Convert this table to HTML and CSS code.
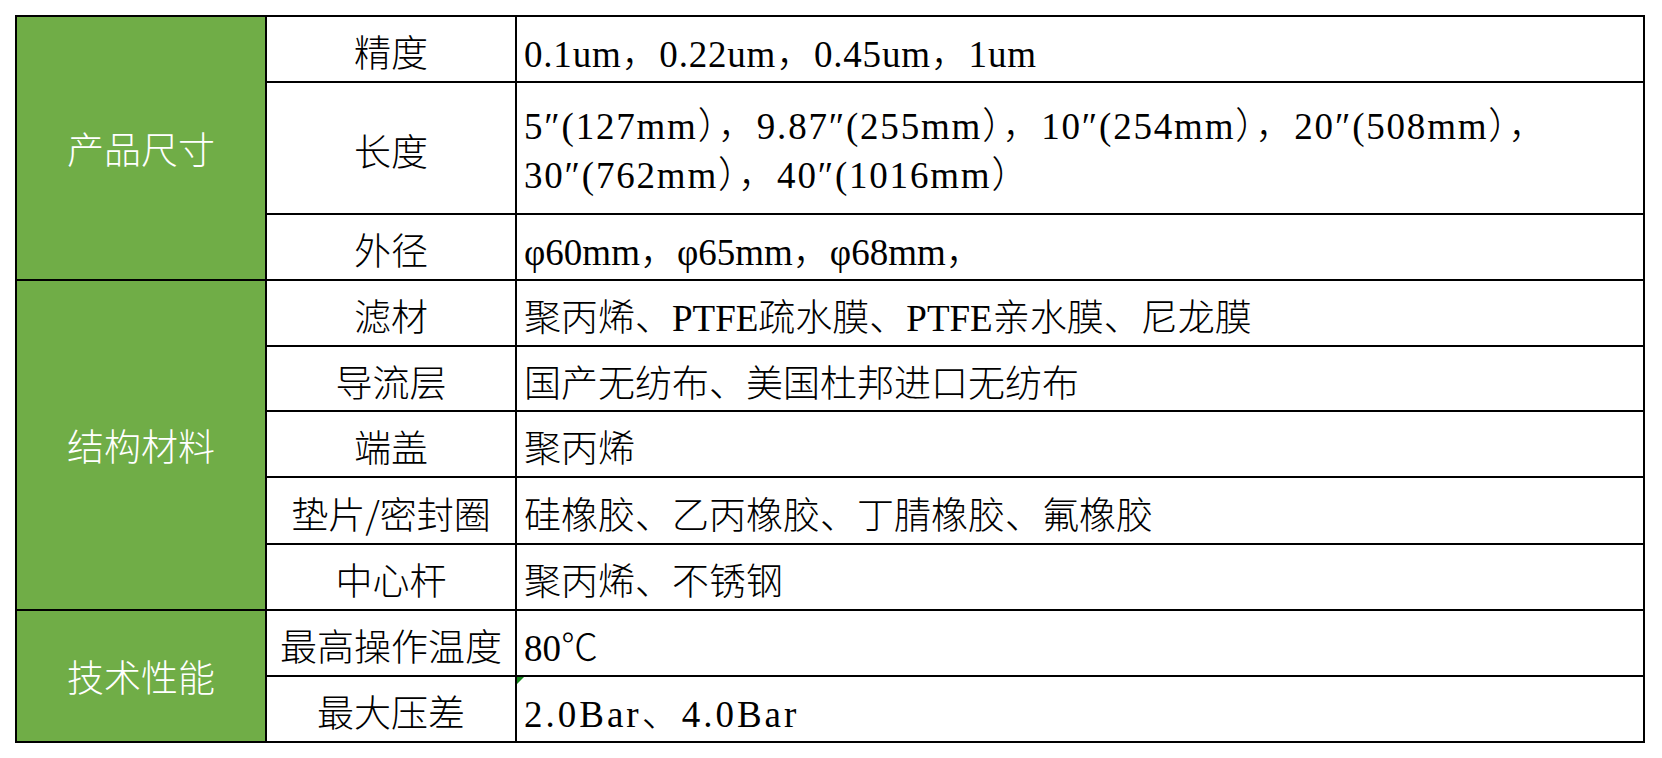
FILE: index.html
```html
<!DOCTYPE html>
<html lang="zh-CN">
<head>
<meta charset="utf-8">
<title>规格参数</title>
<link rel="stylesheet" href="styles.css">
</head>
<body>
<div class="spec">
  <div class="cat cat-size">产品尺寸</div>
  <div class="key">精度</div>
  <div class="val val-precision">0.1um，0.22um，0.45um，1um</div>
  <div class="key">长度</div>
  <div class="val val-multi">5″(127mm），9.87″(255mm），10″(254mm），20″(508mm），<br>30″(762mm），40″(1016mm）</div>
  <div class="key">外径</div>
  <div class="val">φ60mm，φ65mm，φ68mm，</div>

  <div class="cat cat-mat">结构材料</div>
  <div class="key">滤材</div>
  <div class="val">聚丙烯、PTFE疏水膜、PTFE亲水膜、尼龙膜</div>
  <div class="key">导流层</div>
  <div class="val">国产无纺布、美国杜邦进口无纺布</div>
  <div class="key">端盖</div>
  <div class="val">聚丙烯</div>
  <div class="key">垫片/密封圈</div>
  <div class="val">硅橡胶、乙丙橡胶、丁腈橡胶、氟橡胶</div>
  <div class="key">中心杆</div>
  <div class="val">聚丙烯、不锈钢</div>

  <div class="cat cat-perf">技术性能</div>
  <div class="key">最高操作温度</div>
  <div class="val">80℃</div>
  <div class="key">最大压差</div>
  <div class="val val-flag">2.0Bar、4.0Bar</div>
</div>
</body>
</html>
```

FILE: styles.css
```css
html, body {
  margin: 0;
  padding: 0;
  background: #ffffff;
}

body {
  padding: 15px 0 0 15px;
  font-family: "Liberation Serif", "Noto Sans CJK SC", serif;
}

.spec {
  display: grid;
  width: 1630px;
  box-sizing: border-box;
  grid-template-columns: 248px 248px 1126px;
  grid-template-rows: 64px 130px 64px 64px 63px 64px 65px 64px 64px 64px;
  gap: 2px;
  padding: 2px;
  background: #000000;
}

.cat {
  grid-column: 1;
  background: #70ad47;
  color: #ffffff;
  display: flex;
  align-items: center;
  justify-content: center;
  font-family: "Noto Sans CJK SC", sans-serif;
  font-weight: 300;
  font-size: 37px;
}

.cat-size { grid-row: 1 / span 3; }
.cat-mat  { grid-row: 4 / span 5; }
.cat-perf { grid-row: 9 / span 2; }

.key {
  grid-column: 2;
  background: #ffffff;
  color: #000000;
  display: flex;
  align-items: center;
  justify-content: center;
  font-family: "Noto Sans CJK SC", sans-serif;
  font-weight: 300;
  font-size: 37px;
  padding-top: 4px;
  white-space: nowrap;
}

.val {
  grid-column: 3;
  position: relative;
  background: #ffffff;
  color: #000000;
  display: flex;
  align-items: center;
  padding: 4px 0 0 7px;
  font-family: "Liberation Serif", "Noto Sans CJK SC", serif;
  font-weight: 300;
  font-size: 37px;
  white-space: nowrap;
}

.val-precision {
  letter-spacing: 0.8px;
}

.val-multi {
  display: block;
  align-self: stretch;
  padding-top: 19px;
  line-height: 49px;
  letter-spacing: 1.8px;
}

.val-flag {
  letter-spacing: 3px;
}

.val-flag::before {
  content: "";
  position: absolute;
  left: 0;
  top: 0;
  width: 0;
  height: 0;
  border-top: 7px solid #13861b;
  border-right: 7px solid transparent;
}
```
